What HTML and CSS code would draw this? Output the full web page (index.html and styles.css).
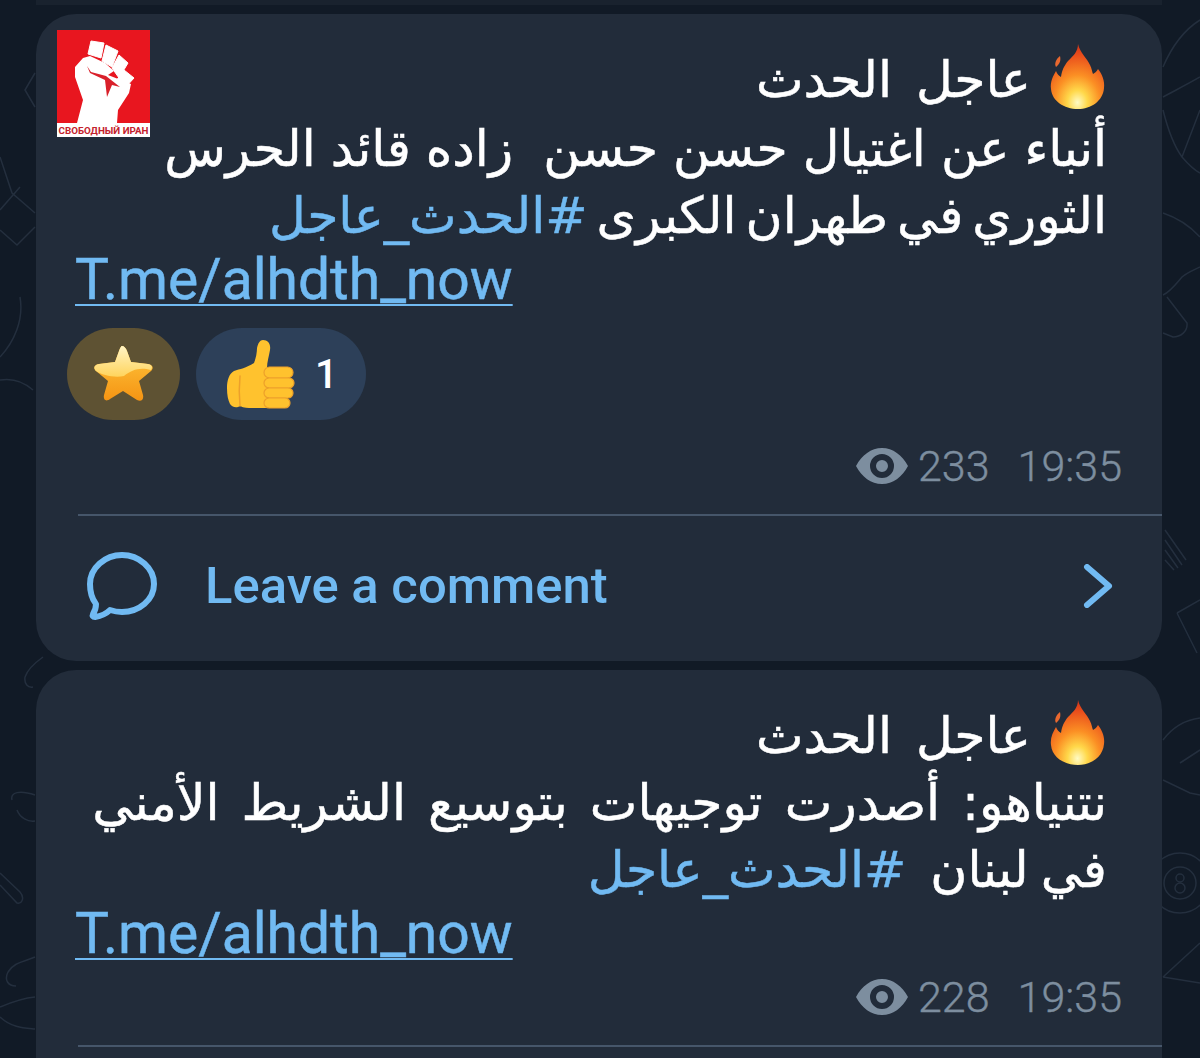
FILE: index.html
```html
<!DOCTYPE html>
<html lang="en">
<head>
<meta charset="UTF-8">
<meta name="viewport" content="width=device-width, initial-scale=1.0">
<title>Channel feed</title>
<link rel="stylesheet" href="styles.css">
</head>
<body>

<svg width="0" height="0" class="defs">
    <defs>
        <radialGradient id="fireGrad" cx="50%" cy="90%" r="85%">
            <stop offset="0" stop-color="#fffbc4"/>
            <stop offset="0.22" stop-color="#ffd84a"/>
            <stop offset="0.5" stop-color="#fb8f24"/>
            <stop offset="0.85" stop-color="#ea4f1c"/>
            <stop offset="1" stop-color="#d93a1a"/>
        </radialGradient>
        <symbol id="fire" viewBox="0 0 58 66">
            <path fill="url(#fireGrad)" d="M29 1C31 10 38 15 41 22C43 26 43 29 44 31C46 30 48 28 49 26C53 31 56 38 55 45C54 58 42 66 29 66C15 66 3 58 2 46C1 39 4 33 7 28C8 31 10 33 12 34C13 27 15 23 19 18C24 13 29 9 29 1Z"/>
            <path fill="#e9682f" d="M7 24C5 21 7 16 11 13C12 17 11 21 7 24Z"/>
        </symbol>
        <symbol id="eye" viewBox="0 0 52 36">
            <path fill="#7d8e9f" fill-rule="evenodd" d="M26 0c11 0 20 7 26 18-6 11-15 18-26 18S6 29 0 18C6 7 15 0 26 0zm0 6a12 12 0 1 0 0 24 12 12 0 0 0 0-24zm0 6a6 6 0 1 1 0 12 6 6 0 0 1 0-12z"/>
        </symbol>
    </defs>
</svg>

<!-- wallpaper doodles -->
<svg class="doodles" viewBox="0 0 1200 1058" fill="none">
    <path d="M0 157L12 193L35 213M0 210L20 187M0 230L17 245L35 227M20 297C24 320 14 342 0 357M0 380C12 378 24 382 33 390M35 73L25 90L35 107"/>
    <path d="M25 677C28 668 36 662 43 657M25 677C24 684 28 688 33 687M12 800C10 792 20 790 35 795M17 810C20 818 28 822 35 821M0 873L20 892C25 898 22 904 17 903L0 885M8 972C14 962 24 962 35 957M0 1007C12 1002 24 998 35 997M0 1017C12 1028 24 1028 35 1029M8 972C4 980 8 986 16 986"/>
    <path d="M1163 67C1172 46 1184 30 1200 20M1163 97C1176 90 1188 84 1200 77M1163 110C1168 130 1174 146 1182 157C1188 164 1194 170 1200 173M1182 157L1200 110M1163 213C1178 218 1190 226 1200 237M1163 295C1170 292 1176 284 1182 277C1188 272 1194 270 1200 267M1167 297L1187 323C1188 332 1180 337 1173 337L1163 333"/>
    <path d="M1165 530L1186 560M1165 540L1182 565M1165 550L1178 568M1165 560L1174 570M1177 613L1200 600M1177 613L1197 653M1163 740C1172 728 1184 720 1200 718M1180 763L1200 750M1163 780L1190 793L1200 795M1163 977L1200 943M1163 977L1200 983"/>
    <circle cx="1180" cy="883" r="30"/>
    <circle cx="1180" cy="883" r="16"/>
    <circle cx="1180" cy="878" r="4"/>
    <circle cx="1180" cy="888" r="5"/>
</svg>

<div class="feed">

    <div class="prev"></div>

    <div class="bubble first">
        <div class="logo">
            <svg class="logo-fist" viewBox="0 0 93 93">
                <path fill="#fff" stroke="#fff" stroke-linejoin="round" d="M34 11L47 13L44 28L31 24ZM49 15L61 21L55 37L45 31ZM62 25L71 33L62 48L55 38ZM67 40L77 48L67 59L59 51Z"/>
                <path fill="#fff" d="M26 28L33 26L48 33L57 41L51 45L74 54L72 63L61 80L60 93H20L26 70L18 47L18 37Z"/>
                <path fill="#d9202a" d="M30 36L33 43L48 50L50 67L55 55L63 57L49 46L34 42Z"/>
            </svg>
            <div class="logo-band">СВОБОДНЫЙ ИРАН</div>
        </div>

        <div class="msg">
            <div class="line head"><svg class="fire"><use href="#fire"/></svg><span>عاجل الحدث</span></div>
            <div class="line close">أنباء عن اغتيال حسن حسن &nbsp;زاده قائد الحرس</div>
            <div class="line tight">الثوري في طهران الكبرى <a class="tag">#الحدث_عاجل</a></div>
            <div class="line url"><a>T.me/alhdth_now</a></div>
        </div>

        <div class="reactions">
            <div class="react gold">
                <svg viewBox="0 0 60 58" width="60" height="58">
                    <defs>
                        <linearGradient id="starBase" x1="0" y1="0" x2="0" y2="1">
                            <stop offset="0" stop-color="#ffc83f"/>
                            <stop offset="1" stop-color="#f59413"/>
                        </linearGradient>
                        <linearGradient id="starTop" x1="0" y1="0" x2="0" y2="1">
                            <stop offset="0" stop-color="#fff4c6"/>
                            <stop offset="1" stop-color="#ffd45c"/>
                        </linearGradient>
                    </defs>
                    <path fill="url(#starBase)" d="M28 1C30 1 32 3 33 6L37 17L54 19C59 20 60 23 57 26L45 36L49 50C50 55 47 57 43 55L29 46L16 54C12 57 9 55 10 50L14 36L2 26C-1 23 0 20 5 19L21 17L25 6C26 3 27 1 28 1Z"/>
                    <path fill="url(#starTop)" d="M28 1C30 1 32 3 33 6L37 17L54 19C58 20 59 22 57 25C45 22 38 25 30 31C20 33 8 30 2 26C-1 23 0 20 5 19L21 17L25 6C26 3 27 1 28 1Z"/>
                </svg>
            </div>
            <div class="react blue">
                <svg viewBox="0 0 69 72" width="69" height="72">
                    <path fill="#ffc22e" d="M37 2C42 2 45 6 44 12C43 18 41 24 41 30L41 70L26 70C22 70 18 70 14 68C11 70 7 70 4 66C2 62 1 57 1 50C1 42 3 36 8 33C14 31 20 30 28 25C30 20 31 14 31 10C32 5 34 2 37 2Z"/>
                    <path fill="none" stroke="#eda02a" stroke-width="1.5" stroke-linecap="round" d="M14 38C13 48 13 58 14 68"/>
                    <g fill="#ffc22e" stroke="#eda02a" stroke-width="1.2">
                        <rect x="38" y="29" width="29" height="11" rx="5.5"/>
                        <rect x="38" y="40" width="30" height="10" rx="5"/>
                        <rect x="38" y="50" width="29" height="10" rx="5"/>
                        <rect x="38" y="60" width="26" height="10" rx="5"/>
                    </g>
                </svg>
                <span class="count">1</span>
            </div>
        </div>

        <div class="meta">
            <svg class="eye"><use href="#eye"/></svg>
            <span class="views">233</span>
            <span class="time">19:35</span>
        </div>

        <div class="comment">
            <svg class="comment-ico" viewBox="0 0 70 68">
                <path fill="none" stroke="#71baf2" stroke-width="6" stroke-linejoin="round" d="M35 3c17 0 32 13 32 29S52 60 35 60c-5 0-9-1-12-2-3 3-9 6-15 7-2 0-3-1-2-3 2-3 3-6 3-10C5 47 3 40 3 32 3 16 18 3 35 3z"/>
            </svg>
            <span class="comment-text">Leave a comment</span>
            <svg class="chev" viewBox="0 0 30 44">
                <path fill="none" stroke="#71baf2" stroke-width="6" stroke-linecap="round" stroke-linejoin="round" d="M4 3l22 19L4 41"/>
            </svg>
        </div>
    </div>

    <div class="bubble second">
        <div class="msg">
            <div class="line head"><svg class="fire"><use href="#fire"/></svg><span>عاجل الحدث</span></div>
            <div class="line wide">نتنياهو: أصدرت توجيهات بتوسيع الشريط الأمني</div>
            <div class="line snug">في لبنان &nbsp;<a class="tag">#الحدث_عاجل</a></div>
            <div class="line url"><a>T.me/alhdth_now</a></div>
        </div>
        <div class="meta">
            <svg class="eye"><use href="#eye"/></svg>
            <span class="views">228</span>
            <span class="time">19:35</span>
        </div>
        <div class="rule"></div>
    </div>

</div>

</body>
</html>
```

FILE: styles.css
```css
html, body {
    margin: 0;
    height: 1058px;
    overflow: hidden;
    background-color: #111a26;
}
.defs {
    position: absolute;
}
.doodles {
    position: absolute;
    left: 0;
    top: 0;
    width: 1200px;
    height: 1058px;
    stroke: #242f3e;
    stroke-width: 1.5;
}
.feed {
    position: relative;
    height: 1058px;
    box-sizing: border-box;
    padding: 0 38px 0 36px;
    display: flex;
    flex-direction: column;
}
.prev {
    height: 5px;
    margin-bottom: 9px;
    background-color: #19222e;
}
.bubble {
    position: relative;
    background-color: #222c3a;
    border-radius: 40px;
    padding-top: 32px;
}
.second {
    flex: 1;
    margin-top: 9px;
    border-radius: 40px 40px 0 0;
}
.logo {
    position: absolute;
    left: 21px;
    top: 16px;
    width: 93px;
    height: 107px;
    background-color: #e8161f;
}
.logo-fist {
    display: block;
    width: 93px;
    height: 93px;
}
.logo-band {
    height: 14px;
    line-height: 15px;
    background-color: #fff;
    color: #c4222c;
    font-family: "Roboto", sans-serif;
    font-size: 9.8px;
    font-weight: 700;
    text-align: center;
    white-space: nowrap;
}
.msg {
    padding: 0 55px 0 39px;
}
.line {
    direction: rtl;
    height: 67px;
    line-height: 67px;
    font-family: "DejaVu Sans", sans-serif;
    font-size: 50.5px;
    color: #fff;
    white-space: nowrap;
    -webkit-text-stroke: 0.5px;
}
.head {
    display: flex;
    align-items: center;
    gap: 18px;
    word-spacing: 8px;
}
.first .head {
    margin-bottom: 2px;
}
.close {
    word-spacing: -1px;
}
.tight {
    word-spacing: -7px;
}
.wide {
    word-spacing: 6px;
}
.snug {
    word-spacing: -4px;
}
.fire {
    width: 58px;
    height: 66px;
    margin-top: -8px;
}
.tag {
    color: #71baf2;
}
.url {
    direction: ltr;
    font-family: "Roboto", sans-serif;
    font-size: 57px;
    height: 62px;
    line-height: 62px;
}
.url a {
    color: #71baf2;
    text-decoration: underline;
    text-decoration-thickness: 2px;
    text-underline-offset: 5px;
}
.reactions {
    display: flex;
    gap: 16px;
    margin: 17px 0 0 31px;
}
.react {
    height: 92px;
    border-radius: 46px;
    display: flex;
    align-items: center;
}
.gold {
    width: 113px;
    justify-content: center;
    background-color: #5e5233;
}
.blue {
    width: 170px;
    padding-left: 30px;
    box-sizing: border-box;
    background-color: #2d4059;
}
.count {
    margin-left: 20px;
    font-family: "Roboto", sans-serif;
    font-size: 40px;
    font-weight: 500;
    color: #fff;
}
.meta {
    display: flex;
    align-items: center;
    justify-content: flex-end;
    padding-right: 40px;
    margin-top: 24px;
    height: 44px;
    font-family: "Roboto", sans-serif;
    font-size: 43px;
    font-weight: 300;
    color: #7d8e9f;
    -webkit-text-stroke: 0.4px;
}
.second .meta {
    margin-top: 10px;
}
.eye {
    width: 52px;
    height: 36px;
    margin-right: 10px;
}
.time {
    margin-left: 28px;
}
.comment {
    display: flex;
    align-items: center;
    height: 147px;
    padding-bottom: 6px;
    margin: 26px 0 0 42px;
    border-top: 2px solid #46566a;
    box-sizing: border-box;
}
.comment-ico {
    width: 70px;
    height: 68px;
    margin-left: 9px;
}
.comment-text {
    margin-left: 48px;
    font-family: "Roboto", sans-serif;
    font-size: 50.8px;
    font-weight: 500;
    color: #71baf2;
}
.chev {
    width: 30px;
    height: 44px;
    margin-left: auto;
    margin-right: 49px;
}
.rule {
    margin: 26px 0 0 42px;
    border-top: 2px solid #46566a;
}
```
